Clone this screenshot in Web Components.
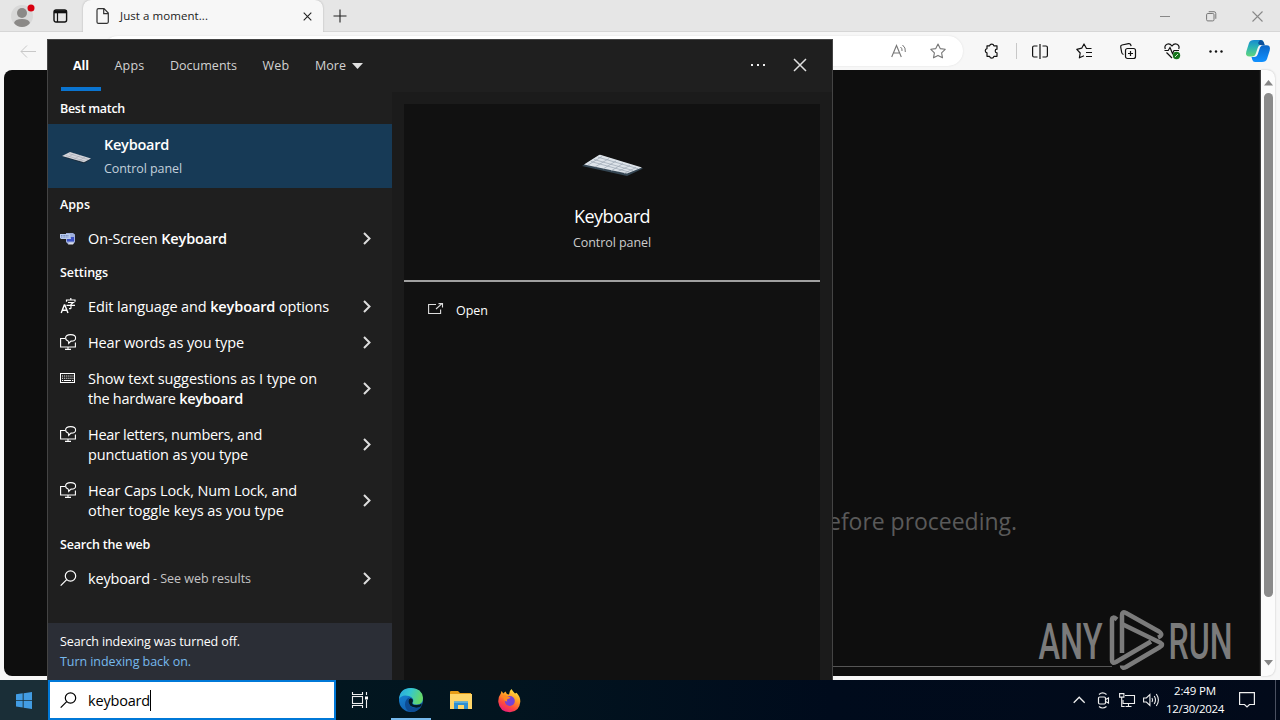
<!DOCTYPE html>
<html lang="en">
<head>
<meta charset="utf-8">
<title>Search - keyboard</title>
<style>
  html, body {
    margin: 0;
    width: 1280px;
    height: 720px;
    overflow: hidden;
    font-family: "Open Sans", "Noto Sans", sans-serif;
  }
</style>
</head>
<body>
<desktop-shell>
  <browser-window></browser-window>
  <task-bar slot="taskbar"></task-bar>
  <search-flyout slot="flyout"></search-flyout>
</desktop-shell>

<script>
const ICONS = {
  profile: `<circle cx="12" cy="12" r="11" fill="#d8d8d8"/><circle cx="12" cy="9" r="5" fill="#8b8987"/><path d="M4 19q1-4 8-4t8 4q-3 4-8 4t-8-4Z" fill="#8b8987"/><circle cx="21" cy="4" r="3.5" fill="#d80010"/>`,
  tabs: `<rect x="1" y="1" width="12.6" height="12" rx="2" stroke="#111" stroke-width="1.4"/><path d="M1 2.8h12.6" stroke="#111" stroke-width="3"/><path d="M4.5 3v10" stroke="#111" stroke-width="1.2"/>`,
  page: `<path d="M1 2.2Q1 .7 2.5.7H8l4.3 4.4v9q0 1.2-1.3 1.2H2.5Q1 15.300 1 14V2.200ZM7.700.9v4.700h4.500" stroke="#333" stroke-width="1.200"/>`,
  close: `<path d="M.7.7l7.600 7.600M8.300.7L.7 8.300" stroke="#222" stroke-width="1.100"/>`,
  plus: `<path d="M7 .5v13M.5 7h13" stroke="#222" stroke-width="1.100"/>`,
  back: `<path d="M16 6.500H1M7 .5l-6 6 6 6" stroke="#c8c8c8"/>`,
  min: `<path d="M0 5.500h10" stroke="#888"/>`,
  restore: `<rect x=".6" y="2.500" width="7.400" height="7.400" rx="1.200" stroke="#777"/><path d="M2.700.7H8Q9.800.7 9.800 2.500v5.300" stroke="#777"/>`,
  winclose: `<path d="M.5.5l10 10M10.500.5l-10 10" stroke="#888" stroke-width="1.100"/>`,
  read: `<path d="M.7 13L5.500 1.500 10.300 13M2.400 9h6.200" stroke="#777" stroke-width="1.100"/><path d="M9.500 3q2 1.500 1.500 4M11.500 1q3.500 2.500 2.800 7" stroke="#777"/>`,
  star: `<path d="M8 1l2.200 4.600 5 .7-3.600 3.500.9 5L8 12.400l-4.500 2.400.9-5L.8 6.300l5-.7L8 1Z" stroke="#777" stroke-width="1.100" stroke-linejoin="round"/>`,
  puzzle: `<path d="M4 2.800h2.600a2.200 2.200 0 0 1 4.300 0H14v3.400a1.800 1.800 0 0 0 0 3.600v3.500h-3.100a2.200 2.200 0 0 1-4.300 0H4V9.900a2.200 2.200 0 0 1 0-4.300V2.800Z" stroke="#111" stroke-width="1.200" stroke-linejoin="round"/>`,
  split: `<path d="M5.500 2H2Q.6 2 .6 3.500v8Q.6 13 2 13h3.500M10.500 2H14q1.400 0 1.400 1.500v8Q15.400 13 14 13h-3.500M8 0v15" stroke="#111" stroke-width="1.200"/>`,
  favs: `<path d="M15.500 5.500h-5L8 1 5.700 5.200.8 6.300 4.200 10l-.8 4.800L8 12.700M10 9.500h6M10 13.500h6" stroke="#111" stroke-width="1.200" stroke-linejoin="round"/>`,
  collect: `<rect x="5.500" y="5.500" width="10" height="10" rx="2" stroke="#111" stroke-width="1.200"/><path d="M10.500 8v5M8 10.500h5M3.500 11.500Q2 11 1.700 9.500L.7 4Q.5 2.300 2 2L8.500.7q1.800-.3 2.300 1.300l.3 1.200" stroke="#111" stroke-width="1.200"/>`,
  heart: `<path d="M1.300 6Q0 2.500 3 1.200 6 .3 8 3q2-2.700 5-1.800 3 1.500 1.700 4.800M.5 7.500h3.700L6 4.500l2.500 6L10 7.500h5M2.500 9.500L8 15" stroke="#111" stroke-width="1.200"/><circle cx="12.500" cy="12.500" r="3.700" fill="#15751c"/><path d="M11 14l3-3" stroke="#fff" stroke-width=".8"/>`,
  dots: `<g fill="#111"><circle cx="1.500" cy="1.500" r="1.200"/><circle cx="7" cy="1.500" r="1.200"/><circle cx="12.500" cy="1.500" r="1.200"/></g>`,
  copilot: `<defs><linearGradient id="a" x1="0" y1="0" x2="0" y2="1"><stop stop-color="#168bd0"/><stop offset=".45" stop-color="#2bb4b4"/><stop offset="1" stop-color="#63d57c"/></linearGradient><linearGradient id="b" x1="0" y1="0" x2="0" y2="1"><stop stop-color="#0a66c8"/><stop offset="1" stop-color="#1191ff"/></linearGradient></defs>
    <path d="M8 0h7q2 0 2.700 2.300L18.500 5h-4q-2 0-3 3.500L10 13q-1 3.500-4 3.500H3.500Q-1 16.500.3 11.500L3 3Q4 0 8 0Z" fill="url(#a)"/>
    <path d="M14 0q3 0 4 3l.7 2.300h-3.200q-3 0-3.500-2.300Z" fill="#0a4f9c"/>
    <path d="M16 22H9q-2 0-2.700-2.300L5.500 17H8q3 0 4-3.500L13.500 9q1-3.700 4-3.700h3q4.500 0 3.200 5.200L21 19q-1 3-5 3Z" fill="url(#b)"/>`,
  chevron: `<path d="M1 1l5.500 5.500L1 12" stroke="#ddd" stroke-width="2"/>`,
  flyclose: `<path d="M1 1l12 12M13 1L1 13" stroke="#e0e0e0" stroke-width="1.500"/>`,
  flydots: `<g fill="#eee"><rect x="0" y="0" width="2" height="2"/><rect x="6" y="0" width="2" height="2"/><rect x="12" y="0" width="2" height="2"/></g>`,
  caret: `<path d="M0 0h11L5.500 6Z" fill="#e0e0e0"/>`,
  kbd: `<path d="M0 12L18 1 61 14.500 45 22Z" fill="#354653"/><path d="M2 10.500L17 1Q18 .6 19 1L60 13.500 45 19.500Z" fill="#dde3e9"/><path d="M12 5.500l39 11M9 7.500l38 10.500M16 3.200l40 11.500M20 2.500L6 11M27 4.500L13 13M34 7L21 15M41 9.500L29 17M48 11.500l-12 6M54 13.500l-12 6" stroke="#9aa5b2" stroke-width=".7"/>`,
  kbdsmall: `<path d="M0 5.500L8 1l21 7-7 4.500Z" fill="#1b2c3c"/><path d="M0 5L8 1l21 6.500-7 3.700Z" fill="#d4d6dc"/><path d="M4 4.500l19 5.700M7 2.700l19 5.800M12 2.500L6 6.500M18 4.500L12 8.300M23 6l-6 3.700" stroke="#a2a5b0" stroke-width=".6"/>`,
  osk: `<path d="M6 1h7l2 1.500V10l-2 2H8L6 10Z" fill="#9eaedb"/><path d="M7 5h7v4.500H7Z" fill="#3b50c4"/><path d="M0 2h10l1 5H1L0 6Z" fill="#b9cbed"/><path d="M1 3.500h8M1 5h8" stroke="#5169a8" stroke-width=".7" stroke-dasharray="1 .6"/><path d="M8 12.500h5l1-2H9Z" fill="#d9dce8"/>`,
  lang: `<path d="M1.200 15L4.300 7h.5L8 15M2.300 12.300h4.500" stroke="#fff" stroke-width="1.400"/><path d="M10.800 0v2M6.500 3.800V2h8.500v1.800M8 4.500h5.300L11 6.300V10q0 1-2 .6M6.500 7.300H15" stroke="#fff" stroke-width="1.200"/>`,
  hear: `<path d="M5 4.500H.6V13h14.800V8.500M8 13v2M5 15.400h6" stroke="#fff" stroke-width="1.100"/><path d="M8.500 7.300Q5.600 6.200 5.600 4q0-3.400 5-3.400t5 3.300-4.600 3.200L8.700 9.500V7.300" stroke="#fff" stroke-width="1.100"/>`,
  keys: `<rect x=".5" y=".5" width="14" height="9" stroke="#fff"/><path d="M2 3h11.500M2 5.200h11.500" stroke="#fff" stroke-width="1.100" stroke-dasharray="1.100 1"/><path d="M2 7.500h1.200M4 7.500h7M12 7.500h1.300" stroke="#fff"/>`,
  search: `<circle cx="10.500" cy="6" r="5.200" stroke="currentColor" stroke-width="1.200"/><path d="M6.700 9.700L.7 15.700" stroke="currentColor" stroke-width="1.200"/>`,
  open: `<path d="M8 1.500H.6v9h12V6.500M8 6l6-5.300M10.500.6h4V4.500" stroke="#ddd" stroke-width="1.100"/>`,
  windows: `<path d="M0 2.300L6.700 1.300V8H0ZM7.600 1.200L16 0V8H7.600ZM0 8.800H6.700V15.500L0 14.500ZM7.600 8.800H16V17L7.600 15.700Z" fill="#429ce3"/>`,
  taskview: `<path d="M.5 0v2.500h10V0M.5 16v-2.500h10V16M14.500 0v3M14.500 8v8" stroke="#eee" stroke-width="1.100"/><rect x=".5" y="4.500" width="10" height="7" stroke="#eee" stroke-width="1.100"/><rect x="13" y="4.500" width="3" height="3" fill="#fff"/>`,
  edge: `<defs><linearGradient id="a" x1="0" y1="0" x2="1" y2=".3"><stop stop-color="#28a5df"/><stop offset=".5" stop-color="#35c7cf"/><stop offset="1" stop-color="#65d869"/></linearGradient><linearGradient id="b" x1="0" y1="0" x2=".5" y2="1"><stop stop-color="#168ad8"/><stop offset="1" stop-color="#1260b2"/></linearGradient></defs>
    <circle cx="12" cy="12" r="12" fill="url(#b)"/><path d="M0 11Q1 0 12 0q11 0 12 10 0 6-6 6.500-4 .2-4.500-1.500 1.500-2 .5-4-1-2-4-3Q3 6 0 11Z" fill="url(#a)"/><path d="M9.500 13q0 6 6.500 7 4 .2 6.500-2-3 5.500-9.500 6Q6 23 6 16.500 6 11 11 9q-1.500 1.500-1.500 4Z" fill="#0d4c95"/><path d="M13.500 11q1.200 2.500-.3 4 0 2.200 4.500 2 3 0 5-1.500l-.4 2.500q-2.500 2-6.300 1.600-6.500-1.100-6.500-6.600Q10 9 13.500 11Z" fill="#041a27"/>`,
  folder: `<path d="M0 1q0-1 1-1h7l2 2h11v4H0Z" fill="#e79d17"/><path d="M0 3h22v15H0Z" fill="#ffd669"/><path d="M4 10.500h14V18h-4v-4H8v4H4Z" fill="#2f8fd0"/><path d="M4 10.500h14V12H4Z" fill="#58aee0"/>`,
  firefox: `<defs><linearGradient id="a" x1=".8" y1="0" x2=".3" y2="1"><stop stop-color="#ffed45"/><stop offset=".4" stop-color="#ff9b25"/><stop offset=".7" stop-color="#ff4c3d"/><stop offset="1" stop-color="#e91a7b"/></linearGradient></defs>
    <path d="M13.500 0q1 2 3.500 4.500l1.500-.8q4 4 3.800 9Q21.500 22.500 12 23.200 1.500 23 .3 13 0 8 2.800 4.500L3.500 2q1.200 1 1.700 2.500L7.500 2.500Q8 5 11 5.500 11 2 13.500 0Z" fill="url(#a)"/><circle cx="11.800" cy="12" r="5" fill="#7542d5"/><path d="M2.500 8q3-3 7-.8l3 1.300q-1 1.500-3 1.500-1 1 0 2.500-4 0-4-4Z" fill="#ff8a20"/>`,
  trayup: `<path d="M.7 6.700L6.200 1.200l5.500 5.500" stroke="#eee" stroke-width="1.300"/>`,
  traycam: `<rect x="1.500" y="5" width="7" height="7" rx="1.200" stroke="#eee" stroke-width="1.200"/><path d="M8.500 7.500L11.500 6v5L8.500 9.500M2 2.500Q5.500-.7 9.500 2.500M2 14.500q3.500 3 7.500 0" stroke="#eee" stroke-width="1.100"/>`,
  traynet: `<path d="M6 2.500h9.500v8H4V7M9.500 10.500v3M6.500 13.500h6" stroke="#eee" stroke-width="1.100"/><path d="M.6.6h4.300v3.500H.6ZM2.700 4v9.500h3" stroke="#eee" stroke-width="1.100"/>`,
  trayvol: `<path d="M.6 5h2.800l3.500-3.500v11L3.400 9H.6ZM9 5q1.200 2 0 4M11.200 3q2.600 4 0 8M13.300 1q4.200 6 0 12" stroke="#eee" stroke-width="1.100"/>`,
  notify: `<path d="M.6.6h14.800v11.900H10.500L8 15l-2.500-2.500H.6Z" stroke="#eee" stroke-width="1.200"/>`,
  up: `<path d="M0 5.500L4.500 0 9 5.500Z" fill="#868686"/>`,
  down: `<path d="M0 0h9L4.500 5.500Z" fill="#868686"/>`
};

class UiIcon extends HTMLElement {
  connectedCallback() {
    const w = this.getAttribute("w") || 16;
    const h = this.getAttribute("h") || w;
    this.attachShadow({ mode: "open" }).innerHTML = `
      <style>
        :host { display: block; flex: none; width: ${w}px; height: ${h}px; }
        svg { display: block; overflow: visible; }
      </style>
      <svg width="${w}" height="${h}" viewBox="0 0 ${w} ${h}" fill="none">${ICONS[this.getAttribute("name")]}</svg>
    `;
  }
}

// Single line of text, tracked so that it fills a given width
class UiText extends HTMLElement {
  connectedCallback() {
    this.attachShadow({ mode: "open" }).innerHTML = `
      <style>
        :host { display: block; white-space: nowrap; flex: none; }
        span { display: inline-block; vertical-align: top; }
      </style>
      <span><slot></slot></span>
    `;
    const span = this.shadowRoot.querySelector("span");
    const target = Number(this.getAttribute("w"));
    const count = this.textContent.length;
    if (target && count > 1) {
      const natural = span.getBoundingClientRect().width;
      span.style.letterSpacing = `${(target - natural) / count}px`;
    }
  }
}

class DesktopShell extends HTMLElement {
  constructor() {
    super();
    this.attachShadow({ mode: "open" }).innerHTML = `
      <style>
        :host {
          position: relative;
          display: grid;
          grid-template-rows: 680px 40px;
          width: 1280px;
          height: 720px;
        }
        /* the flyout floats over the browser */
        ::slotted(search-flyout) { position: absolute; left: 47px; top: 39px; }
      </style>
      <slot></slot>
      <slot name="taskbar"></slot>
      <slot name="flyout"></slot>
    `;
  }
}

class BrowserWindow extends HTMLElement {
  connectedCallback() {
    this.attachShadow({ mode: "open" }).innerHTML = `
      <style>
        :host {
          display: grid;
          grid-template-rows: 32px 38px 1fr;
          background: #f7f7f7;
          overflow: hidden;
        }
        .strip { display: flex; align-items: center; background: #e6e6e6; box-shadow: inset 0 -1px #d6d6d6; }
        .profile { padding-left: 10px; width: 43px; box-sizing: border-box; }
        .tab {
          display: flex; align-items: center; box-sizing: border-box;
          width: 240px; height: 32px; margin: 0 10px 0 15px; padding: 0 11px 0 13px;
          background: #f7f7f7; border-radius: 8px 8px 0 0; box-shadow: 0 0 2px #aaa;
          clip-path: inset(0 -4px 0 -4px);
          font-size: 11.5px; color: #222;
        }
        .tab ui-text { margin: -2px 0 0 11px; flex: 1; }
        .controls { display: flex; margin-left: auto; align-items: center; }
        .controls div { width: 46px; display: flex; justify-content: center; }
        .toolbar { display: flex; align-items: center; }
        .back { margin-left: 20px; }
        .address {
          display: flex; align-items: center; justify-content: flex-end; gap: 24px;
          height: 30px; flex: 1; margin-left: 66px; padding-right: 17px;
          background: #fff; border-radius: 15px; box-shadow: 0 0 2px #ddd;
        }
        .tool { width: 44px; display: flex; justify-content: center; }
        .puzzle { margin-left: 6px; }
        .divider { width: 1px; height: 16px; background: #c8c8c8; margin: 0 1px 0 3px; }
        .copilot { width: 40px; padding-right: 2px; display: flex; justify-content: center; }
        .view { display: grid; grid-template-columns: 1257px 14px; margin: 0 5px 4px 4px; }
        .doc {
          display: flex; flex-direction: column; box-sizing: border-box;
          padding-left: 824px; background: #0e0e0e;
          border-radius: 8px 0 0 8px; color: #5a5a5a; overflow: hidden;
        }
        .doc ui-text { margin-top: 434px; font-size: 23px; line-height: 34px; }
        .doc hr { width: 284px; height: 1px; margin: 128px 0 0; border: 0; background: #555; }
        .brand { width: 200px; height: 64px; margin: -58px 0 0 210px; display: block; overflow: visible; }
        .brand text { font: 500 50px Roboto, sans-serif; fill: #7b7b7b; }
        .scroll {
          display: flex; flex-direction: column; align-items: center;
          padding: 10px 0; background: #fcfcfc; border-radius: 0 8px 8px 0;
          box-shadow: 0 0 2px #bbb;
        }
        .thumb { width: 9px; height: 504px; margin: 7px 0 auto 1px; border-radius: 5px; background: #8b8b8b; }
      </style>
      <div class="strip">
        <div class="profile"><ui-icon name="profile" w="24"></ui-icon></div>
        <ui-icon name="tabs" w="15" h="14" style="margin-left:10px"></ui-icon>
        <div class="tab">
          <ui-icon name="page" w="13" h="16"></ui-icon>
          <ui-text w="88">Just a moment...</ui-text>
          <ui-icon name="close" w="9"></ui-icon>
        </div>
        <ui-icon name="plus" w="14"></ui-icon>
        <div class="controls">
          <div><ui-icon name="min" w="10"></ui-icon></div>
          <div><ui-icon name="restore" w="10"></ui-icon></div>
          <div><ui-icon name="winclose" w="11"></ui-icon></div>
        </div>
      </div>
      <div class="toolbar">
        <ui-icon class="back" name="back" w="17" h="13"></ui-icon>
        <div class="address">
          <ui-icon name="read" w="15" h="14"></ui-icon>
          <ui-icon name="star" w="16"></ui-icon>
        </div>
        <div class="tool puzzle"><ui-icon name="puzzle" w="16"></ui-icon></div>
        <div class="divider"></div>
        <div class="tool"><ui-icon name="split" w="16" h="15"></ui-icon></div>
        <div class="tool"><ui-icon name="favs" w="16"></ui-icon></div>
        <div class="tool"><ui-icon name="collect" w="16"></ui-icon></div>
        <div class="tool"><ui-icon name="heart" w="16"></ui-icon></div>
        <div class="tool"><ui-icon name="dots" w="14" h="3"></ui-icon></div>
        <div class="copilot"><ui-icon name="copilot" w="24" h="22"></ui-icon></div>
      </div>
      <div class="view">
        <div class="doc">
          <ui-text w="189">efore proceeding.</ui-text>
          <hr>
          <svg class="brand" viewBox="0 0 200 64">
            <text x="0.500" y="50" textLength="64" lengthAdjust="spacingAndGlyphs">ANY</text>
            <text x="130.500" y="50" textLength="64" lengthAdjust="spacingAndGlyphs">RUN</text>
            <g fill="none" stroke="#7b7b7b" stroke-width="4.500" stroke-linejoin="round">
              <path d="M79 10.500Q74 6.500 74 11V51.500Q74 55 78 53L113 32.500"/>
              <path d="M84 44V6Q84 2 88 4L121 22.500Q126 26 120 28.500"/>
              <path d="M84 15L122 33.500Q126 36 122 38L88 58Q84 60 84 56.500"/>
            </g>
          </svg>
        </div>
        <div class="scroll">
          <ui-icon name="up" w="9" h="6"></ui-icon>
          <div class="thumb"></div>
          <ui-icon name="down" w="9" h="6"></ui-icon>
        </div>
      </div>
    `;
  }
}

class ResultRow extends HTMLElement {
  connectedCallback() {
    const [w, h] = (this.getAttribute("size") || "16 16").split(" ");
    this.attachShadow({ mode: "open" }).innerHTML = `
      <style>
        :host {
          display: flex; align-items: center; box-sizing: border-box;
          padding: 9px 21px 7px 12px; color: #fff;
          font-size: 14.5px; line-height: 20px;
        }
        .icon { width: 28px; height: 18px; align-self: flex-start; display: flex; align-items: center; }
        .text { flex: 1; }
        .go { margin-top: -2px; }
      </style>
      <div class="icon"><ui-icon name="${this.getAttribute("icon")}" w="${w}" h="${h}"></ui-icon></div>
      <div class="text"><slot></slot></div>
      <ui-icon class="go" name="chevron" w="8" h="13"></ui-icon>
    `;
  }
}

class SearchFlyout extends HTMLElement {
  connectedCallback() {
    this.attachShadow({ mode: "open" }).innerHTML = `
      <style>
        :host {
          display: grid; grid-template-rows: 52px 1fr; box-sizing: border-box;
          width: 786px; height: 641px;
          border: 1px solid #444; border-bottom: 0; background: #1b1b1b;
        }
        .tabs {
          display: flex; align-items: flex-start; padding: 16px 25px 0;
          background: #1f1f1f; font-size: 12.5px; line-height: 20px; color: #d2d2d2;
        }
        .tabs ui-text { margin-right: 25.5px; }
        .all {
          color: #fff; font-weight: 700;
          padding: 0 12px 11px; margin: 0 13.5px 0 -12px !important;
          border-bottom: 4px solid #0a74d0;
        }
        .tabs .more { margin-right: 6px; }
        .body { display: grid; grid-template-columns: 344px 1fr; gap: 12px; padding-right: 12px; }
        .list { display: flex; flex-direction: column; background: #1f1f1f; }
        h2 { margin: 0; padding: 7px 12px 5px; font-size: 12.5px; line-height: 20px; font-weight: 600; color: #fff; }
        .best {
          display: flex; align-items: center; height: 64px; box-sizing: border-box;
          padding: 2px 0 0 14px; gap: 13px; background: #173a56; color: #fff;
        }
        .best b { font-size: 14.5px; line-height: 22px; font-weight: 600; display: block; }
        .best small { font-size: 12.5px; line-height: 25px; color: #c3d0db; display: block; }
        b { font-weight: 600; }
        .sub { font-size: 12.5px; color: #c5c5c5; }
        .web { display: flex; gap: 3px; }
        .notice {
          margin-top: auto; height: 57px; box-sizing: border-box; padding: 9px 12px 0;
          background: #2b2e36; font-size: 12.5px; line-height: 20px; color: #fff;
        }
        .notice .link { color: #76b9ed; }
        .preview {
          display: flex; flex-direction: column; margin-top: 12px; background: #111; color: #fff;
        }
        .hero {
          display: flex; flex-direction: column; align-items: center;
          height: 178px; box-sizing: border-box; padding-top: 50px; border-bottom: 2px solid #a0a0a0;
        }
        .hero .name { margin-top: 24px; font-size: 18px; line-height: 32px; }
        .hero .kind { margin-top: 1px; font-size: 12.5px; line-height: 20px; color: #ccc; }
        .open { display: flex; align-items: center; gap: 13px; padding: 19px 24px; font-size: 12.5px; line-height: 20px; }
        .open ui-icon { margin-top: -5px; }
      </style>
      <div class="tabs">
        <ui-text class="all" w="16">All</ui-text>
        <ui-text w="30">Apps</ui-text>
        <ui-text w="67">Documents</ui-text>
        <ui-text w="27">Web</ui-text>
        <ui-text class="more" w="31">More</ui-text>
        <ui-icon name="caret" w="11" h="6" style="margin-top:7px"></ui-icon>
        <ui-icon name="flydots" w="14" h="2" style="margin:8px 28px 0 auto"></ui-icon>
        <ui-icon name="flyclose" w="14" style="margin-top:2px"></ui-icon>
      </div>
      <div class="body">
        <div class="list">
          <h2><ui-text w="65">Best match</ui-text></h2>
          <div class="best">
            <ui-icon name="kbdsmall" w="29" h="12"></ui-icon>
            <div>
              <b><ui-text w="65">Keyboard</ui-text></b>
              <small><ui-text w="78">Control panel</ui-text></small>
            </div>
          </div>
          <h2><ui-text w="30">Apps</ui-text></h2>
          <result-row icon="osk" size="16 13"><ui-text w="139">On-Screen <b>Keyboard</b></ui-text></result-row>
          <h2><ui-text w="48">Settings</ui-text></h2>
          <result-row icon="lang"><ui-text w="241">Edit language and <b>keyboard</b> options</ui-text></result-row>
          <result-row icon="hear"><ui-text w="156">Hear words as you type</ui-text></result-row>
          <result-row icon="keys" size="15 10">
            <ui-text w="229">Show text suggestions as I type on</ui-text>
            <ui-text w="155">the hardware <b>keyboard</b></ui-text>
          </result-row>
          <result-row icon="hear">
            <ui-text w="174">Hear letters, numbers, and</ui-text>
            <ui-text w="160">punctuation as you type</ui-text>
          </result-row>
          <result-row icon="hear">
            <ui-text w="209">Hear Caps Lock, Num Lock, and</ui-text>
            <ui-text w="196">other toggle keys as you type</ui-text>
          </result-row>
          <h2><ui-text w="90">Search the web</ui-text></h2>
          <result-row icon="search">
            <div class="web"><ui-text w="62">keyboard</ui-text><ui-text class="sub" w="98">- See web results</ui-text></div>
          </result-row>
          <div class="notice">
            <ui-text w="180">Search indexing was turned off.</ui-text>
            <ui-text class="link" w="131">Turn indexing back on.</ui-text>
          </div>
        </div>
        <div class="preview">
          <div class="hero">
            <ui-icon name="kbd" w="61" h="22"></ui-icon>
            <ui-text class="name" w="76">Keyboard</ui-text>
            <ui-text class="kind" w="78">Control panel</ui-text>
          </div>
          <div class="open">
            <ui-icon name="open" w="15" h="11"></ui-icon>
            <ui-text w="32">Open</ui-text>
          </div>
        </div>
      </div>
    `;
  }
}

class TaskBar extends HTMLElement {
  connectedCallback() {
    this.attachShadow({ mode: "open" }).innerHTML = `
      <style>
        :host {
          display: flex; align-items: stretch; color: #fff;
          background: linear-gradient(90deg, #021a20, #02141f 40%, #000b1c 65%, #020a1a);
        }
        .cell { display: flex; align-items: center; justify-content: center; box-sizing: border-box; width: 49px; }
        .start { width: 48px; background: #1a2e37; }
        .search {
          display: flex; align-items: center; gap: 12px; box-sizing: border-box;
          width: 288px; padding-left: 10px; border: 2px solid #0078d7;
          background: #fff; color: #000; font-size: 14.5px;
        }
        .search ui-text { border-right: 1px solid #000; line-height: 20px; padding-top: 1px; }
        .active { width: 40px; margin: 0 5px 0 7px; border-bottom: 2px solid #76b9ed; padding-top: 2px; }
        .tray { display: flex; align-items: center; margin-left: auto; }
        .tray > div { width: 24px; display: flex; justify-content: center; }
        .tray > .clock {
          width: 64px; flex-direction: column; align-items: center;
          font-size: 11.5px; line-height: 18px; padding-bottom: 1px;
        }
        .tray > .bell { width: 40px; }
        .peek { width: 4px; margin-left: 8px; border-left: 1px solid #4a5060; }
      </style>
      <div class="cell start"><ui-icon name="windows" w="16" h="17"></ui-icon></div>
      <div class="search">
        <ui-icon name="search"></ui-icon>
        <ui-text w="62">keyboard</ui-text>
      </div>
      <div class="cell" style="width:48px"><ui-icon name="taskview" w="16"></ui-icon></div>
      <div class="cell active"><ui-icon name="edge" w="24"></ui-icon></div>
      <div class="cell"><ui-icon name="folder" w="22" h="18"></ui-icon></div>
      <div class="cell"><ui-icon name="firefox" w="23"></ui-icon></div>
      <div class="tray">
        <div><ui-icon name="trayup" w="12" h="8"></ui-icon></div>
        <div><ui-icon name="traycam" w="12" h="17"></ui-icon></div>
        <div><ui-icon name="traynet" w="16" h="14"></ui-icon></div>
        <div><ui-icon name="trayvol" w="16" h="14"></ui-icon></div>
        <div class="clock">
          <ui-text w="42">2:49 PM</ui-text>
          <ui-text w="58">12/30/2024</ui-text>
        </div>
        <div class="bell"><ui-icon name="notify" w="16"></ui-icon></div>
      </div>
      <div class="peek"></div>
    `;
  }
}

customElements.define("ui-icon", UiIcon);
customElements.define("ui-text", UiText);
customElements.define("result-row", ResultRow);
customElements.define("desktop-shell", DesktopShell);
customElements.define("browser-window", BrowserWindow);
customElements.define("search-flyout", SearchFlyout);
customElements.define("task-bar", TaskBar);
</script>
</body>
</html>
